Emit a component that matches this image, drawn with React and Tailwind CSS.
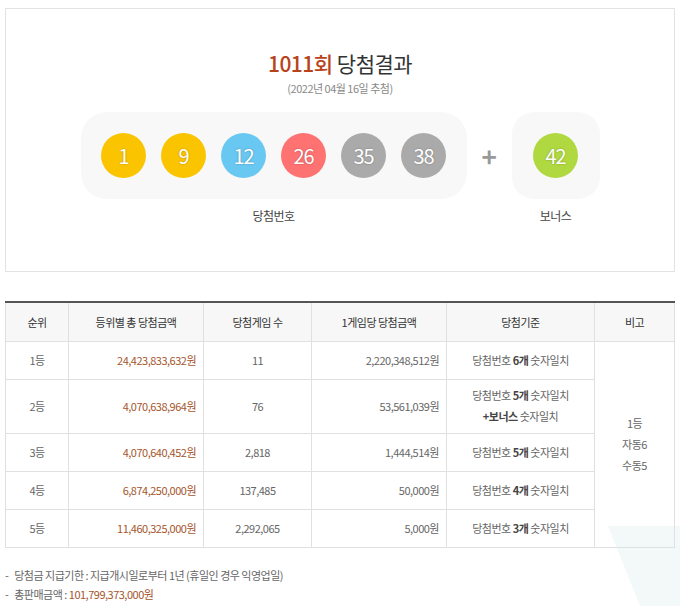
export default function App() {
  const balls = [
    [1, "bg-[#fbc400]"], [9, "bg-[#fbc400]"], [12, "bg-[#69c8f2]"],
    [26, "bg-[#ff7272]"], [35, "bg-[#aaaaaa]"], [38, "bg-[#aaaaaa]"],
  ];
  const Ball = ({ n, c }) => (
    <div className={`w-[45px] h-[45px] rounded-full ${c} flex items-center justify-center text-white text-[20px] tracking-[-1px] [text-shadow:0_0_2px_rgba(0,0,0,0.3)]`}>{n}</div>
  );
  const rows = [
    ["1등", "24,423,833,632원", "11", "2,220,348,512원", [["6개"]], "h-[38px]"],
    ["2등", "4,070,638,964원", "76", "53,561,039원", [["5개"], ["+보너스", true]], "h-[54px]"],
    ["3등", "4,070,640,452원", "2,818", "1,444,514원", [["5개"]], "h-[38px]"],
    ["4등", "6,874,250,000원", "137,485", "50,000원", [["4개"]], "h-[38px]"],
    ["5등", "11,460,325,000원", "2,292,065", "5,000원", [["3개"]], "h-[38px]"],
  ];
  const b = "border-r border-[#e0e0e0]";
  return (
    <div className="w-[680px] h-[606px] bg-white relative overflow-hidden text-[#666] tracking-[-0.5px]" style={{ fontFamily: '"Noto Sans CJK KR", "Noto Sans", sans-serif' }}>
      <div className="absolute right-[-40px] bottom-[-40px] w-[160px] h-[120px] bg-[#f2f9f8] [clip-path:polygon(30%_0,100%_0,100%_100%,60%_100%)]" />
      <div className="relative pt-[8px] px-[5px]">
        <div className="h-[264px] border border-[#e3e3e3] flex flex-col items-center">
          <div className="mt-[40px] text-[21px] text-[#333] leading-[28px]"><span className="text-[#b8431b] font-medium">1011회</span> 당첨결과</div>
          <div className="mt-[4px] text-[11px] text-[#888] leading-[14px]">(2022년 04월 16일 추첨)</div>
          <div className="mt-[17px] flex items-start">
            <div className="flex flex-col items-center">
              <div className="w-[386px] h-[87px] bg-[#f8f8f8] rounded-[26px] flex items-center justify-center gap-[15px]">
                {balls.map(([n, c]) => <Ball key={n} n={n} c={c} />)}
              </div>
              <div className="mt-[8px] text-[12px] text-[#444]">당첨번호</div>
            </div>
            <div className="w-[45px] h-[87px] flex items-center justify-center text-[26px] text-[#999] font-bold">+</div>
            <div className="flex flex-col items-center">
              <div className="w-[88px] h-[87px] bg-[#f8f8f8] rounded-[22px] flex items-center justify-center">
                <Ball n={42} c="bg-[#b0d840]" />
              </div>
              <div className="mt-[8px] text-[12px] text-[#444]">보너스</div>
            </div>
          </div>
        </div>
        <table className="mt-[29px] w-[670px] border-collapse border-t-2 border-t-[#555] border-b border-x border-[#e0e0e0] text-[11px]">
          <thead>
            <tr className="h-[39px] bg-[#f7f7f7] text-[#333] border-b border-[#e0e0e0]">
              <th className={`font-normal w-[63px] ${b}`}>순위</th>
              <th className={`font-normal w-[135px] ${b}`}>등위별 총 당첨금액</th>
              <th className={`font-normal w-[108px] ${b}`}>당첨게임 수</th>
              <th className={`font-normal w-[135px] ${b}`}>1게임당 당첨금액</th>
              <th className={`font-normal w-[148px] ${b}`}>당첨기준</th>
              <th className="font-normal">비고</th>
            </tr>
          </thead>
          <tbody>
            {rows.map((r, i) => (
              <tr key={i} className={`${r[5]} border-b border-[#e0e0e0]`}>
                <td className={`text-center ${b}`}>{r[0]}</td>
                <td className={`text-right pr-[7px] text-[#a5552c] ${b}`}>{r[1]}</td>
                <td className={`text-center ${b}`}>{r[2]}</td>
                <td className={`text-right pr-[7px] ${b}`}>{r[3]}</td>
                <td className={`text-center leading-[21px] ${b}`}>
                  {r[4].map(([v, bonus], j) => bonus
                    ? <div key={j}><b className="text-[#444] font-bold">+보너스</b> 숫자일치</div>
                    : <div key={j}>당첨번호 <b className="text-[#444] font-bold">{v}</b> 숫자일치</div>)}
                </td>
                {i === 0 && (
                  <td rowSpan={5} className="text-center leading-[21px] align-middle">1등<br />자동6<br />수동5</td>
                )}
              </tr>
            ))}
          </tbody>
        </table>
        <div className="mt-[18px] text-[11px] leading-[19px]">
          <div>-&nbsp;&nbsp; 당첨금 지급기한 : 지급개시일로부터 1년 (휴일인 경우 익영업일)</div>
          <div>-&nbsp;&nbsp; 총판매금액 : <span className="text-[#a5552c]">101,799,373,000원</span></div>
        </div>
      </div>
    </div>
  );
}
